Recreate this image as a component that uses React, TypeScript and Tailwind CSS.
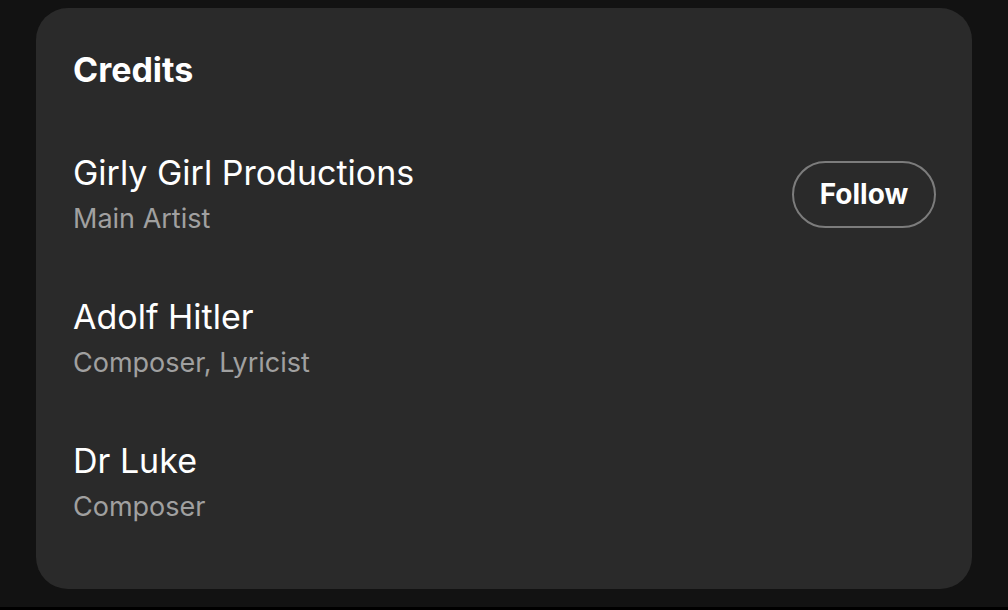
import React from "react";

interface Credit {
  name: string;
  roles: string;
  follow?: boolean;
}

const credits: Credit[] = [
  { name: "Girly Girl Productions", roles: "Main Artist", follow: true },
  { name: "Adolf Hitler", roles: "Composer, Lyricist" },
  { name: "Dr Luke", roles: "Composer" },
];

const CreditRow: React.FC<Credit> = ({ name, roles, follow }) => (
  <div className="flex items-center justify-between">
    <div className="flex flex-col">
      <span className="text-[34px] leading-[40px] text-white">{name}</span>
      <span className="mt-[10px] text-[27px] leading-[32px] text-[#a0a0a0]">{roles}</span>
    </div>
    {follow && (
      <button className="h-[67px] w-[144px] rounded-full border-2 border-[#7c7c7c] text-[28px] font-bold text-white">
        Follow
      </button>
    )}
  </div>
);

export default function App() {
  return (
    <div
      className="flex h-[610px] w-[1008px] flex-col bg-[#121212]"
      style={{ fontFamily: "Inter, 'Noto Sans', sans-serif" }}
    >
      <div className="mx-[36px] mt-[8px] h-[581px] rounded-[32px] bg-[#2a2a2a] pl-[37px] pr-[36px] pt-[42px]">
        <h2 className="text-[34px] font-bold leading-[40px] text-white">Credits</h2>
        <div className="mt-[63px] flex flex-col gap-[62px]">
          {credits.map((c) => (
            <CreditRow key={c.name} {...c} />
          ))}
        </div>
      </div>
      <div className="flex-1" />
      <div className="h-[3px] bg-black" />
    </div>
  );
}
